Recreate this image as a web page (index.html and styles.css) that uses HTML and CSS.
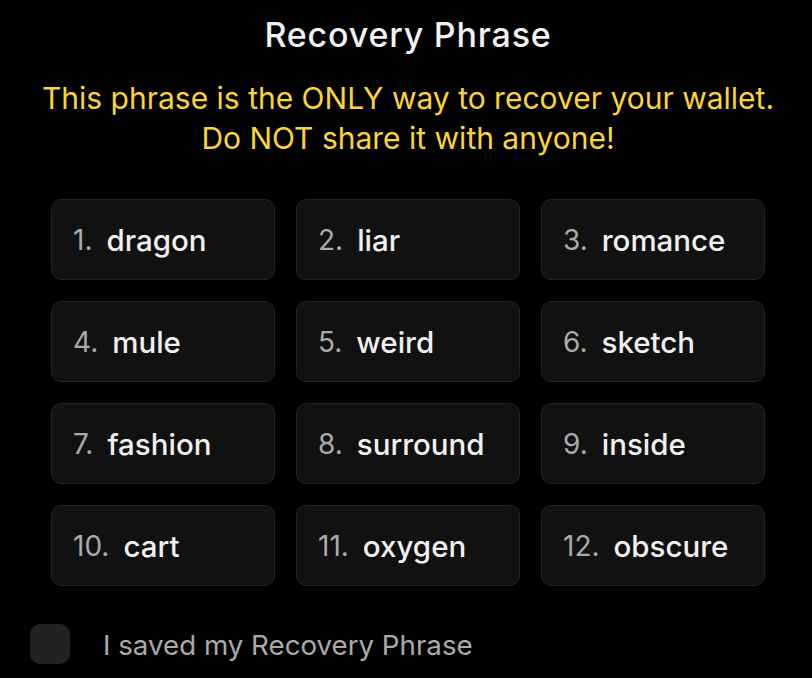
FILE: index.html
```html
<!DOCTYPE html>
<html>
<head>
<meta charset="utf-8">
<link rel="stylesheet" href="styles.css">
</head>
<body>
<main class="page">
  <h1 class="title">Recovery Phrase</h1>
  <p class="warning">This phrase is the ONLY way to recover your wallet.<br>Do NOT share it with anyone!</p>
  <div class="grid">
    <div class="word"><span class="num">1.</span><span class="text">dragon</span></div>
    <div class="word"><span class="num">2.</span><span class="text">liar</span></div>
    <div class="word"><span class="num">3.</span><span class="text">romance</span></div>
    <div class="word"><span class="num">4.</span><span class="text">mule</span></div>
    <div class="word"><span class="num">5.</span><span class="text">weird</span></div>
    <div class="word"><span class="num">6.</span><span class="text">sketch</span></div>
    <div class="word"><span class="num">7.</span><span class="text">fashion</span></div>
    <div class="word"><span class="num">8.</span><span class="text">surround</span></div>
    <div class="word"><span class="num">9.</span><span class="text">inside</span></div>
    <div class="word"><span class="num">10.</span><span class="text">cart</span></div>
    <div class="word"><span class="num">11.</span><span class="text">oxygen</span></div>
    <div class="word"><span class="num">12.</span><span class="text">obscure</span></div>
  </div>
  <label class="confirm">
    <span class="box"></span>
    <span class="confirm-text">I saved my Recovery Phrase</span>
  </label>
</main>
</body>
</html>
```

FILE: styles.css
```css
html, body {
  margin: 0;
  padding: 0;
  background: #000;
}
body {
  font-family: Inter, "Noto Sans", sans-serif;
  color: #f2f2f2;
}
.page {
  padding: 13px 47px 0 51px;
  display: flex;
  flex-direction: column;
}
.title {
  margin: 0;
  text-align: center;
  font-size: 34px;
  font-weight: 500;
  letter-spacing: 0.8px;
  line-height: 44px;
  color: #f2f2f2;
}
.warning {
  margin: 21px -40px 0 -40px;
  text-align: center;
  font-size: 30px;
  line-height: 40px;
  color: #fcd535;
}
.grid {
  margin-top: 41px;
  display: grid;
  grid-template-columns: repeat(3, 1fr);
  column-gap: 21px;
  row-gap: 21px;
}
.word {
  height: 79px;
  box-sizing: content-box;
  border: 1px solid #232323;
  border-radius: 10px;
  background: #111;
  display: flex;
  align-items: center;
  padding: 0 21px;
}
.num {
  font-size: 28px;
  color: #aaa;
  margin-right: 14px;
}
.text {
  font-size: 29.5px;
  font-weight: 500;
  color: #f0f0f0;
}
.confirm {
  margin: 36px 0 0 -21px;
  display: flex;
  align-items: center;
}
.box {
  width: 40px;
  height: 40px;
  border-radius: 10px;
  background: #222;
  margin-right: 33px;
}
.confirm-text {
  font-size: 27.7px;
  line-height: 40px;
  padding-top: 3px;
  color: #aaa;
}
```
